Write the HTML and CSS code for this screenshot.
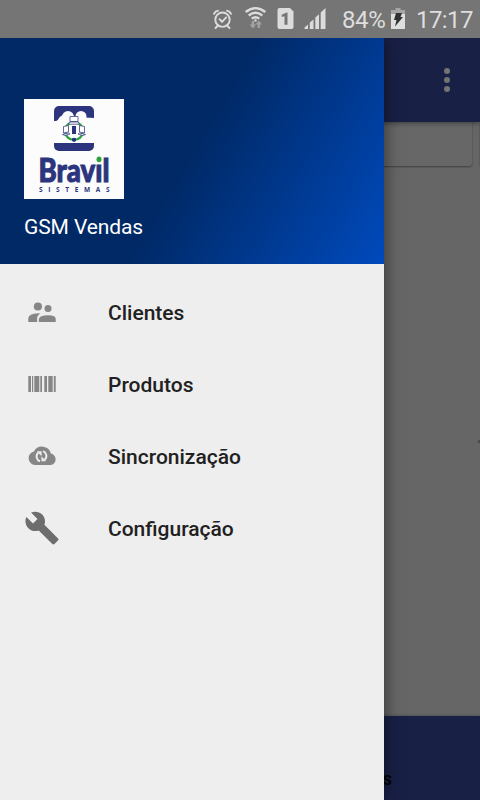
FILE: index.html
```html
<!DOCTYPE html>
<html lang="pt-BR">
<head>
  <meta charset="UTF-8">
  <meta name="viewport" content="width=device-width, initial-scale=1">
  <title>GSM Vendas</title>
  <link rel="stylesheet" href="styles.css">
</head>
<body>
  <div class="statusbar">
    <svg class="status-icons" width="120" height="38" viewBox="0 0 120 38">
      <!-- alarm -->
      <g fill="none" stroke="#dcdcdc" stroke-width="1.9" stroke-linecap="round">
        <circle cx="16.500" cy="19.700" r="7.200"/>
        <path d="M13.500 19.200l2.500 2.600 4.200-4.400M11.500 26l-2 2M21.500 26l2 2M8 13.800q1-2.600 4-3.200M25 13.800q-1-2.600-4-3.200"/>
      </g>
      <!-- wifi -->
      <g fill="none" stroke="#dcdcdc" stroke-width="2.300">
        <path d="M39.700 12q9.800-7.800 19.600 0M42.700 15.500q6.800-5.400 13.600 0M45.700 18.700q3.800-3 7.600 0"/>
      </g>
      <circle cx="49.500" cy="20.400" r="1.200" fill="#dcdcdc"/>
      <path fill="#a2a2a2" d="M45.700 21h2.400v3.500h2L46.900 28.500l-3.400-4h2.200zM51.600 28H54v-3.500h2.200L52.800 20.500l-3.200 4h2z"/>
      <!-- sim 1 -->
      <path fill="#dcdcdc" d="M73.500 8H84l3.500 3.500V27a2 2 0 0 1-2 2h-12a2 2 0 0 1-2-2V10a2 2 0 0 1 2-2z"/>
      <path fill="#757575" d="M81.500 12.500v12.300h-3v-8.600l-2.800.9v-2.400l5-2.200z"/>
      <!-- signal -->
      <path fill="#dcdcdc" d="M98.500 29v-1.500l3.500-3V29zM103.800 29v-6.500l3.700-3V29zM109.300 29V17.500l3.700-3.200V29zM114.700 29V12.500L119.500 8v21z"/>
    </svg>
    <span class="percent">84%</span>
    <svg class="battery" width="14" height="38" viewBox="0 0 14 38">
      <path fill="#a5a5a5" d="M0 10h4.500V8h5v2H14v4H0z"/>
      <path fill="#dedede" d="M0 14h14v15H0z"/>
      <path fill="#303030" d="M5 13h6l-1.500 4H12l-8 9.500L5.500 20H3z"/>
    </svg>
    <span class="clock">17:17</span>
  </div>

  <div class="screen">
    <div class="toolbar">
      <svg width="6" height="26" viewBox="0 0 6 26" fill="#737373">
        <circle cx="3" cy="4" r="3"/><circle cx="3" cy="13" r="3"/><circle cx="3" cy="22" r="3"/>
      </svg>
    </div>
    <div class="content">
      <div class="card"></div>
      <div class="card next"></div>
      <i class="edge-mark"></i>
    </div>
    <div class="bottombar"><span>Vendas</span></div>

    <nav class="drawer">
      <header class="drawer-header">
        <svg class="logo" width="100" height="100" viewBox="0 0 100 100">
          <rect width="100" height="100" fill="#fcfcfd"/>
          <!-- blue frame with the cloud cut out -->
          <rect x="30" y="7" width="40" height="45" rx="5" fill="#2b347c"/>
          <g fill="#fcfcfd">
            <rect x="29" y="22" width="42" height="22"/>
            <circle cx="44" cy="18" r="6"/>
            <circle cx="57" cy="17.500" r="5.500"/>
            <path d="M30 22.500q4-.5 5-3.500 2-3 6-3l20 2.500q5 0 9 .5v5H30z"/>
          </g>
          <circle cx="50" cy="32" r="9" fill="none" stroke="#2aa33d" stroke-width="2.200"/>
          <g fill="#fff" stroke="#3b4386" stroke-width=".8">
            <path d="M46 17.500h8v5h-8zM45.500 23h9l.7 2.200H44.800zM39.500 27.500l5-1v6.500l-5 1zM38.500 35.500l6-1.500 1.500 1-5 1.500zM60.500 27.500l-5-1v6.500l5 1zM61.500 35.500l-6-1.500-1.500 1 5 1.500z"/>
          </g>
          <path fill="#2b347c" d="M48 27h4v8h-4zM48 39.500q2-1.500 4 0v2.500l-2 1-2-1z"/>
          <text class="brand" x="14.500" y="82.500" textLength="71" lengthAdjust="spacingAndGlyphs">Bravıl</text>
          <ellipse cx="75" cy="60.300" rx="2.500" ry="2.900" fill="#2aa33d"/>
          <text class="brand-sub" x="15" y="92.500" textLength="70.500">SISTEMAS</text>
        </svg>
        <div class="drawer-title">GSM Vendas</div>
      </header>
      <ul class="menu">
        <li>
          <svg width="36" height="36" viewBox="0 0 36 36" fill="#868686">
            <circle cx="13.900" cy="12.500" r="4.100"/><circle cx="24" cy="14.500" r="3.500"/>
            <path d="M16.500 19.600q-3.700 2-3.400 5.500V28H4.300v-3.500q.4-5 9.600-5.300 1.500 0 2.600.4zM14.800 28v-2.800q.5-4 9-4t7.900 4V28z"/>
          </svg>
          <span>Clientes</span>
        </li>
        <li>
          <svg width="36" height="36" viewBox="0 0 36 36" fill="#868686">
            <path d="M4.300 10H7v16H4.300zM8 10h1.200v16H8zM10.300 10h5v16h-5zM16.300 10H18v16h-1.700zM20.300 10H23v16h-2.700zM24.300 10h4.400v16h-4.400zM29.800 10h1.900v16h-1.900z"/>
          </svg>
          <span>Produtos</span>
        </li>
        <li>
          <svg width="36" height="36" viewBox="0 0 36 36">
            <path fill="#868686" d="M26.900 15.500A9.200 9.200 0 0 0 9.900 13.400 6.900 6.900 0 0 0 11 27h15a5.800 5.800 0 0 0 .9-11.500z"/>
            <path fill="none" stroke="#eee" stroke-width="1.900" d="M16 23.300a5 5 0 0 1-1.700-8.500M19 13.200a5 5 0 0 1 1.700 8.500"/>
            <path fill="#eee" d="M12.800 13.200h4.800v5zM22.200 23.300h-4.800v-5z"/>
          </svg>
          <span>Sincronização</span>
        </li>
        <li>
          <svg width="36" height="36" viewBox="0 0 24 24" fill="#6d6d6d">
            <path d="M22.700 19l-9.100-9.100c.9-2.300.4-5-1.500-6.900-2-2-5-2.400-7.400-1.300L9 6 6 9 1.600 4.700C.4 7.100.9 10.100 2.900 12.100c1.900 1.900 4.600 2.400 6.900 1.500l9.100 9.100c.4.4 1 .4 1.400 0l2.300-2.300c.5-.4.5-1.100.1-1.400z"/>
          </svg>
          <span>Configuração</span>
        </li>
      </ul>
    </nav>
  </div>
</body>
</html>
```

FILE: styles.css
```css
* {
  box-sizing: border-box;
}

body {
  margin: 0;
  width: 480px;
  height: 800px;
  display: flex;
  flex-direction: column;
  overflow: hidden;
  font-family: Roboto, "Liberation Sans", sans-serif;
}

.statusbar {
  flex: none;
  display: flex;
  align-items: center;
  height: 38px;
  padding-left: 206px;
  background: #757575;
  color: #dedede;
  font-size: 24px;
  line-height: 38px;
}

.percent {
  width: 43px;
  margin-left: 16px;
  padding-top: 2px;
  letter-spacing: -0.4px;
}

.battery {
  margin-left: 6px;
}

.clock {
  margin-left: 11px;
  padding-top: 2px;
  letter-spacing: -0.6px;
}

.screen {
  position: relative;
  flex: 1;
  display: flex;
  flex-direction: column;
  overflow: hidden;
  background: #666;
}

.toolbar {
  flex: none;
  display: flex;
  align-items: center;
  justify-content: flex-end;
  height: 84px;
  padding-right: 30px;
  background: #192046;
  box-shadow: 0 1px 5px rgba(0, 0, 0, 0.45);
  z-index: 1;
}

.content {
  position: relative;
  flex: 1;
  display: flex;
  gap: 8px;
  padding-left: 8px;
}

.card {
  flex: none;
  width: 464px;
  height: 44px;
  border-radius: 0 0 3px 3px;
  background: #676767;
  box-shadow: 0 1px 2px rgba(0, 0, 0, 0.4);
}

.edge-mark {
  position: absolute;
  top: 318px;
  right: 0;
  width: 2px;
  height: 3px;
  background: #4c4c4c;
}

.bottombar {
  flex: none;
  height: 84px;
  padding: 51px 88px 0 0;
  background: #192046;
  box-shadow: 0 0 3px rgba(0, 0, 0, 0.3);
  color: #000;
  font-size: 18px;
  font-weight: 500;
  line-height: 24px;
  text-align: right;
}

/* drawer slides over the content */
.drawer {
  position: absolute;
  top: 0;
  left: 0;
  bottom: 0;
  z-index: 2;
  width: 384px;
  background: #eee;
  box-shadow: 0 0 16px rgba(0, 0, 0, 0.55);
}

.drawer-header {
  height: 226px;
  padding: 61px 24px 0;
  background: linear-gradient(120.5deg, #002966, #002966 50%, #004abd);
}

.logo {
  display: block;
}

.drawer-title {
  margin-top: 13px;
  color: #fff;
  font-size: 21px;
  letter-spacing: -0.1px;
  line-height: 30px;
}

.brand {
  fill: #2b347c;
  stroke: #2b347c;
  stroke-width: 1px;
  font-family: Lato, "Open Sans", sans-serif;
  font-size: 32px;
  font-weight: 900;
}

.brand-sub {
  fill: #2b347c;
  font-family: "Open Sans", sans-serif;
  font-size: 6.5px;
  font-weight: 700;
}

.menu {
  margin: 0;
  padding: 12px 0 0;
  list-style: none;
}

.menu li {
  display: flex;
  align-items: center;
  gap: 48px;
  height: 72px;
  padding-left: 24px;
  color: #212121;
  font-size: 21px;
  font-weight: 500;
}

.menu span {
  padding-top: 2px;
}
```
